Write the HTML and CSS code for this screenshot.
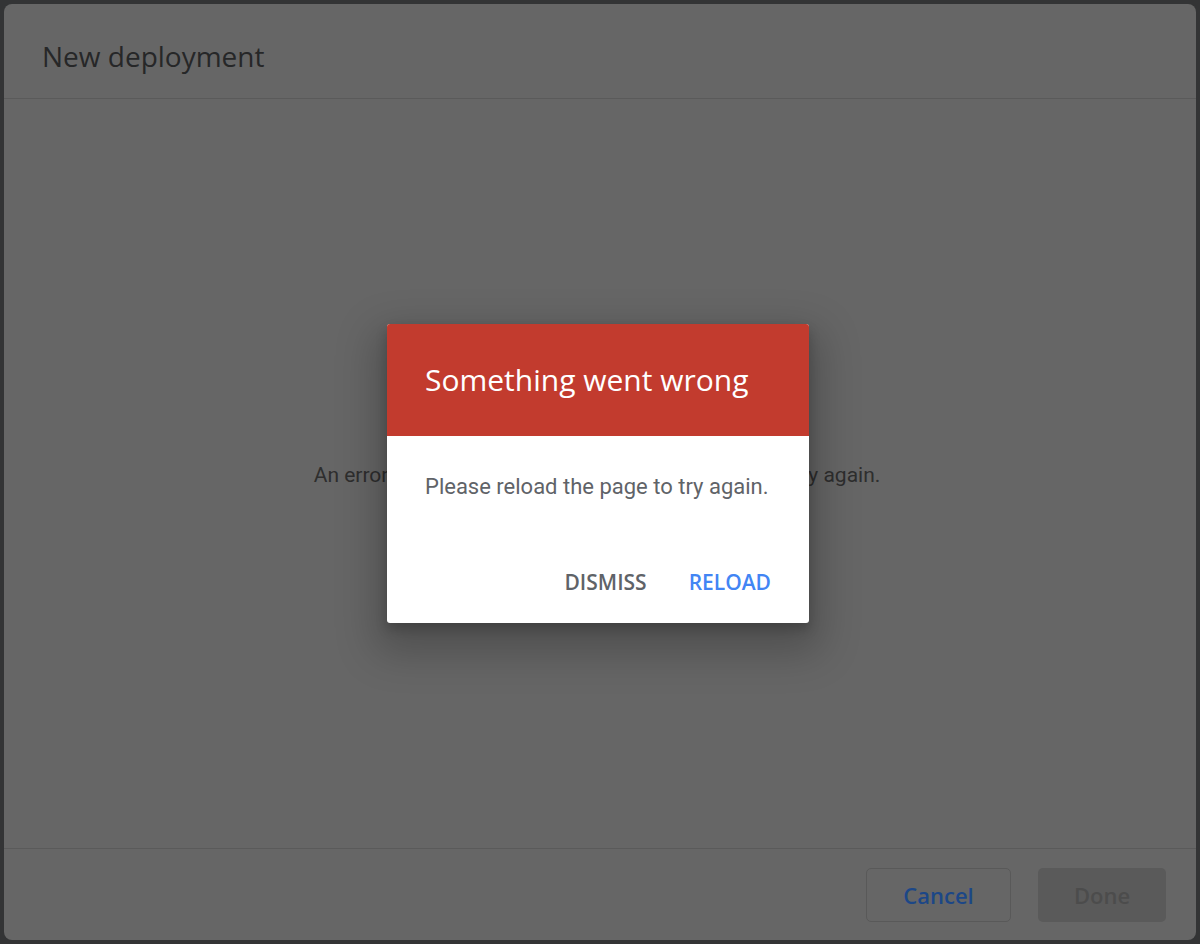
FILE: index.html
```html
<!DOCTYPE html>
<html>
<head>
<meta charset="utf-8">
<link rel="stylesheet" href="styles.css">
</head>
<body>
<div class="card">
  <div class="card-header"><h1 class="card-title">New deployment</h1></div>
  <div class="card-body"><p class="card-msg">An error occurred while loading. Please refresh and try again.</p></div>
  <div class="card-footer">
    <button class="btn btn-outline">Cancel</button>
    <button class="btn btn-disabled">Done</button>
  </div>
</div>
<div class="alert">
  <div class="alert-head">Something went wrong</div>
  <div class="alert-body">Please reload the page to try again.</div>
  <div class="alert-actions">
    <button class="act act-grey">DISMISS</button>
    <button class="act act-blue">RELOAD</button>
  </div>
</div>
</body>
</html>
```
FILE: styles.css
```css
html, body { margin: 0; padding: 0; }
body {
  background: #333435;
  width: 1200px;
  height: 944px;
  overflow: hidden;
  font-family: Roboto, "Liberation Sans", sans-serif;
  padding: 4px;
  box-sizing: border-box;
}
.card {
  height: 936px;
  background: #666666;
  border-radius: 8px;
  display: flex;
  flex-direction: column;
}
.card-header {
  height: 95px;
  border-bottom: 1px solid #5a5a5a;
  display: flex;
  align-items: flex-start;
  padding: 33px 0 0 38px;
  box-sizing: border-box;
}
.card-title {
  margin: 0;
  font-family: "Open Sans", sans-serif;
  font-weight: 500;
  font-size: 28px;
  line-height: 38px;
  color: #262728;
}
.card-body {
  flex: 1;
  display: flex;
  align-items: center;
  justify-content: center;
  border-bottom: 1px solid #5a5a5a;
}
.card-msg {
  margin: 2px 6px 0 0;
  font-size: 21px;
  color: #2e2e2e;
}
.card-footer {
  height: 91px;
  display: flex;
  align-items: center;
  justify-content: flex-end;
  gap: 27px;
  padding-right: 30px;
  box-sizing: border-box;
}
.btn {
  height: 54px;
  border-radius: 5px;
  font-family: "Open Sans", sans-serif;
  font-size: 22px;
  font-weight: 600;
  box-sizing: border-box;
  padding: 0;
}
.btn-outline {
  width: 145px;
  background: transparent;
  border: 1px solid #595959;
  color: #1c4787;
}
.btn-disabled {
  width: 128px;
  background: #5a5a5a;
  border: none;
  color: #4c4c4c;
}
.alert {
  position: absolute;
  left: 387px;
  top: 324px;
  width: 422px;
  height: 299px;
  background: #ffffff;
  border-radius: 3px;
  box-shadow: 0 18px 40px 12px rgba(0,0,0,0.22), 0 6px 12px rgba(0,0,0,0.2);
  display: flex;
  flex-direction: column;
  overflow: hidden;
}
.alert-head {
  height: 112px;
  flex: none;
  background: #c23b2e;
  color: #ffffff;
  font-family: "Open Sans", sans-serif;
  font-size: 30px;
  padding-left: 38px;
  display: flex;
  align-items: center;
  box-sizing: border-box;
  padding-bottom: 2px;
}
.alert-body {
  flex: 1;
  padding: 38px 38px 0 38px;
  font-size: 22px;
  line-height: 26px;
  color: #5f6368;
}
.alert-actions {
  display: flex;
  justify-content: flex-end;
  gap: 42px;
  padding: 0 38px 28px 0;
}
.act {
  background: none;
  border: none;
  padding: 0;
  font-family: "Open Sans", sans-serif;
  font-weight: 600;
  font-size: 21px;
  line-height: 26px;
}
.act-grey { color: #5f6368; }
.act-blue { color: #4285f4; }
```
